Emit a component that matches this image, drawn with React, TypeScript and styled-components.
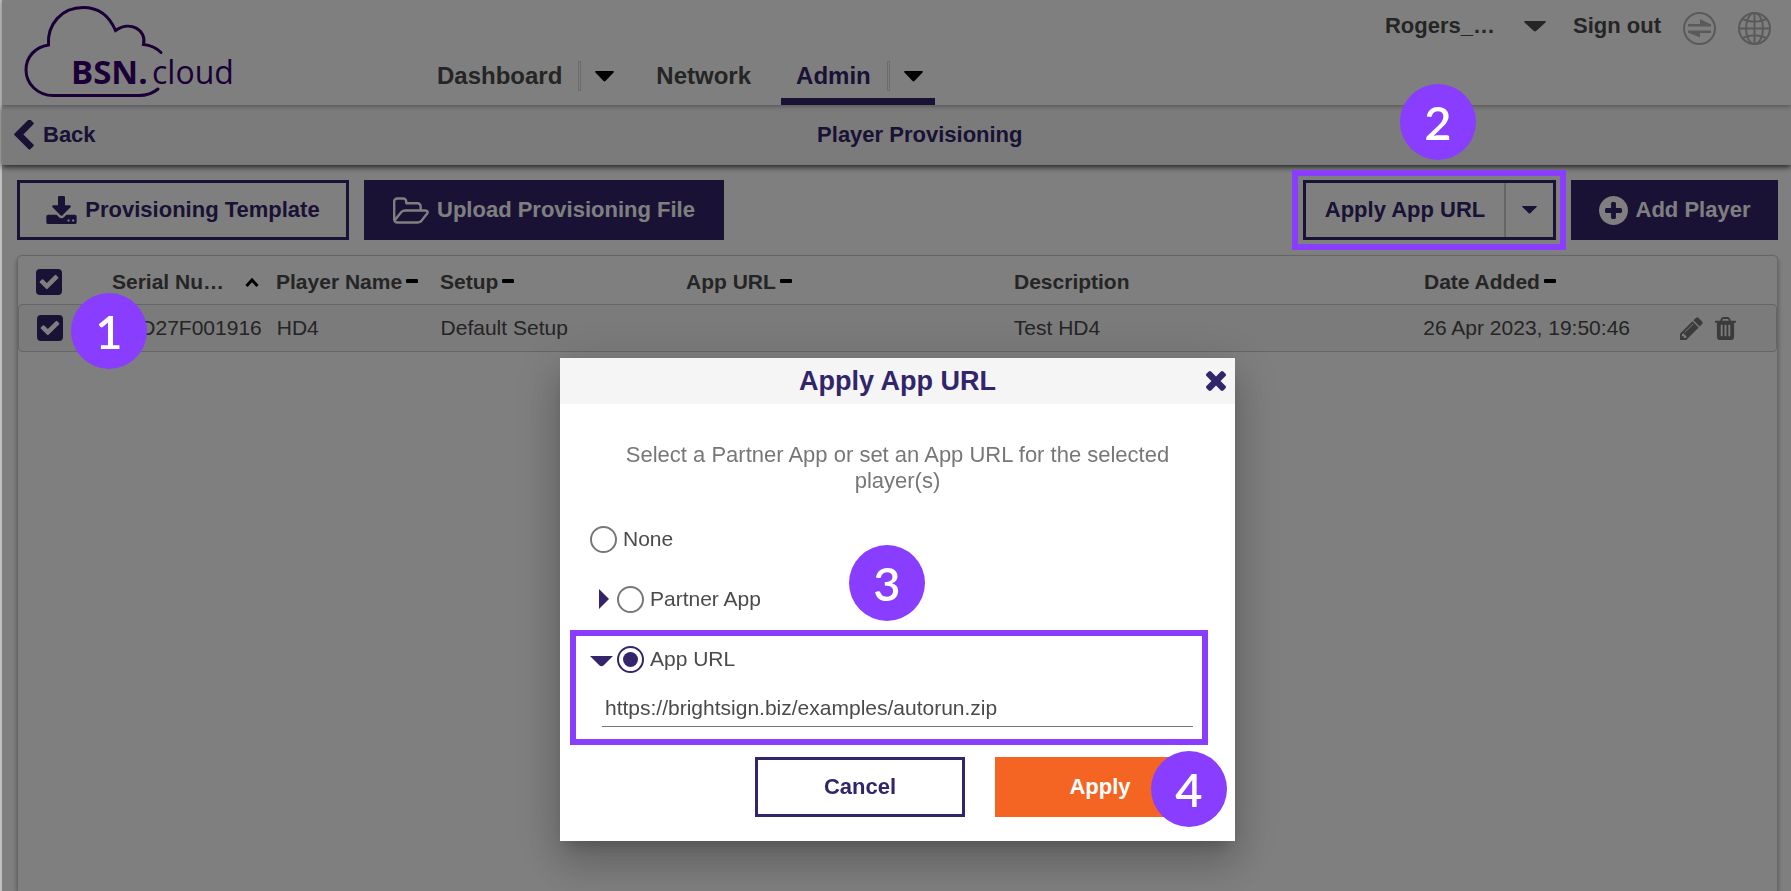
import React, { useState } from "react";
import styled, { createGlobalStyle, css } from "styled-components";

const color = {
  primary: "#32256b",
  text: "#4a4a4a",
  muted: "#777777",
  line: "#cccccc",
  panel: "#f6f6f6",
  orange: "#f46524",
  callout: "#883dff",
};

const GlobalStyle = createGlobalStyle`
  *, *::before, *::after { box-sizing: border-box; }
  body {
    margin: 0;
    background: #ffffff;
    color: ${color.text};
    font-family: "Liberation Sans", Arial, sans-serif;
    font-size: 21px;
  }
  button, input { font: inherit; color: inherit; margin: 0; }
  button { border: 0; padding: 0; background: none; cursor: pointer; }
  a { color: inherit; text-decoration: none; }
  svg { display: block; flex: none; }
`;

/* ---------- icons ---------- */

const glyphs = {
  check:
    "M813 1299l614-614q19-19 19-45t-19-45l-102-102q-19-19-45-19t-45 19l-467 467-211-211q-19-19-45-19t-45 19l-102 102q-19 19-19 45t19 45l358 358q19 19 45 19t45-19z",
  pencil:
    "M491 1536l91-91-235-235-91 91v107h128v128h107zm523-928q0-22-22-22-10 0-17 7l-542 542q-7 7-7 17 0 22 22 22 10 0 17-7l542-542q7-7 7-17zm-54-192l416 416-832 832h-416v-416zm683 96q0 53-37 90l-166 166-416-416 166-165q36-38 90-38 53 0 91 38l235 234q37 39 37 91z",
  trash:
    "M704 1376v-704q0-14-9-23t-23-9h-64q-14 0-23 9t-9 23v704q0 14 9 23t23 9h64q14 0 23-9t9-23zm256 0v-704q0-14-9-23t-23-9h-64q-14 0-23 9t-9 23v704q0 14 9 23t23 9h64q14 0 23-9t9-23zm256 0v-704q0-14-9-23t-23-9h-64q-14 0-23 9t-9 23v704q0 14 9 23t23 9h64q14 0 23-9t9-23zm-544-992h448l-48-117q-7-9-17-11h-317q-10 2-17 11zm928 32v64q0 14-9 23t-23 9h-96v948q0 83-47 143.5t-113 60.5h-832q-66 0-113-58.5t-47-141.5v-952h-96q-14 0-23-9t-9-23v-64q0-14 9-23t23-9h309l70-167q15-37 54-63t79-26h320q40 0 79 26t54 63l70 167h309q14 0 23 9t9 23z",
  close:
    "M1490 1322q0 40-28 68l-136 136q-28 28-68 28t-68-28l-294-294-294 294q-28 28-68 28t-68-28l-136-136q-28-28-28-68t28-68l294-294-294-294q-28-28-28-68t28-68l136-136q28-28 68-28t68 28l294 294 294-294q28-28 68-28t68 28l136 136q28 28 28 68t-28 68l-294 294 294 294q28 28 28 68z",
  plus: "M1344 960v-128q0-26-19-45t-45-19h-256v-256q0-26-19-45t-45-19h-128q-26 0-45 19t-19 45v256h-256q-26 0-45 19t-19 45v128q0 26 19 45t45 19h256v256q0 26 19 45t45 19h128q26 0 45-19t19-45v-256h256q26 0 45-19t19-45zm320-64q0 209-103 385.5t-279.5 279.5-385.5 103-385.5-103-279.5-279.5-103-385.5 103-385.5 279.5-279.5 385.5-103 385.5 103 279.5 279.5 103 385.5z",
  download:
    "M1344 1344q0-26-19-45t-45-19-45 19-19 45 19 45 45 19 45-19 19-45zm256 0q0-26-19-45t-45-19-45 19-19 45 19 45 45 19 45-19 19-45zm128-224v320q0 40-28 68t-68 28h-1472q-40 0-68-28t-28-68v-320q0-40 28-68t68-28h465l135 136q58 56 136 56t136-56l136-136h464q40 0 68 28t28 68zm-325-569q17 41-14 70l-448 448q-18 19-45 19t-45-19l-448-448q-31-29-14-70 17-39 59-39h256v-448q0-26 19-45t45-19h256q26 0 45 19t19 45v448h256q42 0 59 39z",
  folder:
    "M1845 931q0-35-53-35h-1088q-40 0-85.5 21.5t-71.5 52.5l-294 363q-18 24-18 40 0 35 53 35h1088q40 0 86-22t71-53l294-363q18-22 18-39zm-1141-163h768v-160q0-40-28-68t-68-28h-576q-40 0-68-28t-28-68v-64q0-40-28-68t-68-28h-320q-40 0-68 28t-28 68v853l256-315q44-53 116-87.5t140-34.5zm1269 163q0 62-46 120l-295 363q-43 53-116 87.5t-140 34.5h-1088q-92 0-158-66t-66-158v-960q0-92 66-158t158-66h320q92 0 158 66t66 158v32h544q92 0 158 66t66 158v160h192q54 0 99 24.5t67 70.5q15 32 15 68z",
  chevron:
    "M1427 301l-531 531 531 531q19 19 19 45t-19 45l-166 166q-19 19-45 19t-45-19l-742-742q-19-19-19-45t19-45l742-742q19-19 45-19t45 19l166 166q19 19 19 45t-19 45z",
};

type GlyphProps = { name: keyof typeof glyphs; width: number; height: number; box: string };

const Glyph = ({ name, width, height, box }: GlyphProps) => (
  <svg width={width} height={height} viewBox={box} fill="currentColor" aria-hidden="true">
    <path d={glyphs[name]} />
  </svg>
);

const Caret = ({ width, height }: { width: number; height: number }) => (
  <svg width={width} height={height} viewBox="0 0 20 12" preserveAspectRatio="none" fill="currentColor" aria-hidden="true">
    <path d="M1 0h18q1.400 .4 .5 1.500L11 11q-1 1-2 0L.5 1.500Q-.4 .4 1 0z" />
  </svg>
);

const SortUp = () => (
  <svg width="14" height="12" viewBox="0 0 14 12" fill="none" stroke="#000" strokeWidth="3" aria-hidden="true">
    <path d="M1.500 10L7 4l5.500 6" />
  </svg>
);

const SortNone = () => (
  <svg width="12" height="12" viewBox="0 0 12 12" aria-hidden="true">
    <rect y="3" width="12" height="4" rx="1" fill="#000" />
  </svg>
);

const SwapIcon = () => (
  <svg width="33" height="33" viewBox="0 0 33 33" aria-hidden="true">
    <circle cx="16.500" cy="16.500" r="15.500" fill="none" stroke="#b4b4b4" strokeWidth="2" />
    <path d="M5 12h23v2.500H5zM17 7l11 5.500v2H17zM5 18.500h23V21H5zM17 25.500L5 20.500v-2h12z" fill="#b4b4b4" />
  </svg>
);

const GlobeIcon = () => (
  <svg width="33" height="33" viewBox="0 0 33 33" fill="none" stroke="#b4b4b4" strokeWidth="2" aria-hidden="true">
    <circle cx="16.500" cy="16.500" r="15.500" />
    <ellipse cx="16.500" cy="16.500" rx="8.500" ry="15.500" />
    <path d="M16.500 1v31M1 16.500h31M4.500 7q12 5.500 24 0M4.500 26q12-5.500 24 0" />
  </svg>
);

const Logo = () => (
  <svg width="230" height="100" viewBox="22 4 230 100" role="img" aria-label="BSN.cloud">
    <path
      d="M161 52.500Q154 45.500 143.500 44.500C147 30 130 20 115.500 30.500C109 15 99 7.500 83 7.500C62 7.500 47 24 48.500 45C35 47 26 57 26 70C26 84 38 95.500 53 95.500H139Q150 95.500 158 89"
      fill="none"
      stroke="#360070"
      strokeWidth="3"
      strokeLinecap="round"
    />
    <text x="71" y="84" fill="#360070" fontFamily="'Open Sans', 'Noto Sans', sans-serif" fontSize="33" fontWeight="700">
      BSN.
    </text>
    <text x="152" y="84" fill="#360070" fontFamily="'Open Sans', 'Noto Sans', sans-serif" fontSize="32">
      cloud
    </text>
  </svg>
);

/* ---------- page frame ---------- */

const Page = styled.div`
  display: flex;
  flex-direction: column;
  min-height: 100vh;
  border-left: 2px solid #c0c0c0;
`;

const Header = styled.header`
  position: relative;
  z-index: 2;
  display: flex;
  height: 105px;
  padding-left: 20px;
  background: #ffffff;
  box-shadow: 0 1px 5px rgba(0, 0, 0, 0.35);
`;

const Brand = styled.a`
  padding-top: 4px;
  margin-right: 170px;
`;

const Nav = styled.nav`
  display: flex;
  align-items: flex-end;
  gap: 15px;
`;

const NavItem = styled.div<{ $active?: boolean }>`
  display: flex;
  align-items: center;
  height: 51px;
  padding: 0 15px;
  font-size: 24px;
  font-weight: bold;
  color: ${(p) => (p.$active ? color.primary : color.text)};
  border-bottom: 7px solid ${(p) => (p.$active ? color.primary : "transparent")};
`;

const NavMenuButton = styled.button`
  display: flex;
  align-items: center;
  height: 30px;
  margin: 0 -3px 0 16px;
  color: #000000;

  &::before {
    content: "";
    width: 3px;
    height: 30px;
    margin-right: 14px;
    border: 1px solid #d8d8d8;
  }
`;

const Account = styled.div`
  display: flex;
  align-items: flex-start;
  margin-left: auto;
  padding: 12px 20px 0 0;
  font-size: 22px;
  font-weight: bold;
  line-height: 28px;
`;

const AccountMenu = styled.button`
  display: flex;
  align-items: center;
  gap: 29px;
  margin-right: 27px;
`;

const AccountIcon = styled.button`
  margin-left: 22px;
`;

const SubHeader = styled.div`
  position: relative;
  z-index: 1;
  display: flex;
  align-items: center;
  height: 60px;
  padding: 0 47px 0 12px;
  background: ${color.panel};
  color: ${color.primary};
  box-shadow: 0 2px 6px rgba(0, 0, 0, 0.75);
  font-size: 22px;
  font-weight: bold;
`;

const BackLink = styled.a`
  display: flex;
  align-items: center;
  gap: 9px;
`;

const PageTitle = styled.h1`
  flex: 1;
  margin: 0;
  font-size: 22px;
  text-align: center;
`;

/* ---------- toolbar ---------- */

const Toolbar = styled.div`
  display: flex;
  gap: 15px;
  padding: 15px 13px 15px 15px;
`;

const Button = styled.button<{ $kind: "outline" | "solid" | "accent"; $width: number }>`
  display: flex;
  align-items: center;
  justify-content: center;
  gap: 8px;
  min-width: ${(p) => p.$width}px;
  height: 60px;
  font-size: 22px;
  font-weight: bold;
  white-space: nowrap;
  ${(p) =>
    p.$kind === "outline"
      ? css`
          border: 3px solid ${color.primary};
          color: ${color.primary};
        `
      : css`
          background: ${p.$kind === "solid" ? color.primary : color.orange};
          color: #ffffff;
        `}
`;

const SplitButton = styled.div`
  position: relative;
  display: flex;
  width: 253px;
  height: 60px;
  margin-left: auto;
  border: 3px solid ${color.primary};
  color: ${color.primary};
  font-size: 22px;
  font-weight: bold;
`;

const SplitMain = styled.button`
  flex: 1;
  border-right: 2px solid ${color.line};
`;

const SplitCaret = styled.button`
  display: flex;
  align-items: center;
  justify-content: center;
  width: 47px;
`;

/* ---------- callouts ---------- */

const Callout = styled.span<{ $left: number; $top: number }>`
  position: absolute;
  z-index: 20;
  left: ${(p) => p.$left}px;
  top: ${(p) => p.$top}px;
  display: flex;
  align-items: center;
  justify-content: center;
  width: 76px;
  height: 76px;
  border-radius: 50%;
  background: ${color.callout};
  color: #ffffff;
  font-family: Lato, "Liberation Sans", sans-serif;
  font-size: 47px;
  font-weight: 600;
  line-height: 74px;
  pointer-events: none;
`;

const Highlight = styled.span<{ $inset: string }>`
  position: absolute;
  z-index: 20;
  inset: ${(p) => p.$inset};
  border: 6px solid ${color.callout};
  pointer-events: none;
`;

/* ---------- player list ---------- */

const List = styled.main`
  flex: 1;
  margin: 0 13px 0 15px;
  border: 1px solid ${color.line};
  border-bottom: 0;
  border-radius: 5px 5px 0 0;
  box-shadow: 0 3px 5px rgba(0, 0, 0, 0.35);
`;

const Table = styled.table`
  display: block;
`;

const RowGroup = styled.thead`
  display: block;
`;

const Row = styled.tr<{ $head?: boolean }>`
  display: grid;
  grid-template-columns:
    94px minmax(0, 2fr) minmax(0, 2fr) minmax(0, 3fr) minmax(0, 4fr)
    minmax(0, 5fr) minmax(0, 3fr) 107px;
  align-items: center;
  height: 48px;
  ${(p) =>
    p.$head
      ? css`
          padding-top: 3px;
        `
      : css`
          border: 1px solid ${color.line};
          border-radius: 4px;
          background: ${color.panel};
        `}
`;

const HeadCell = styled.th`
  display: flex;
  align-items: center;
  gap: 4px;
  padding: 0;
  text-align: left;
  white-space: nowrap;
`;

const SerialHeadCell = styled(HeadCell)`
  justify-content: space-between;
  padding-right: 17px;
`;

const Cell = styled.td`
  padding: 0;
  white-space: nowrap;
`;

const SerialCell = styled(Cell)`
  padding-right: 15px;
  text-align: right;
`;

const CheckCell = styled(Cell)`
  position: relative;
  padding-left: 18px;
`;

const ActionCell = styled(Cell)`
  display: flex;
  align-items: center;
  gap: 12px;
  padding-left: 11px;
  color: #777777;
`;

const CheckLabel = styled.label`
  display: grid;
  width: 26px;
  height: 26px;
  color: #ffffff;

  > * {
    grid-area: 1 / 1;
    place-self: center;
  }
`;

const CheckInput = styled.input`
  appearance: none;
  width: 26px;
  height: 26px;
  border: 2px solid ${color.primary};
  border-radius: 4px;
  background: #ffffff;

  &:checked {
    background: ${color.primary};
  }
`;

const CheckBox = ({ label }: { label: string }) => {
  const [checked, setChecked] = useState(true);
  return (
    <CheckLabel>
      <CheckInput type="checkbox" aria-label={label} checked={checked} onChange={() => setChecked(!checked)} />
      {checked && <Glyph name="check" width={20} height={16} box="320 424 1152 944" />}
    </CheckLabel>
  );
};

/* ---------- dialog ---------- */

const Backdrop = styled.div`
  position: fixed;
  z-index: 10;
  inset: 0 0 0 2px;
  display: flex;
  align-items: flex-start;
  justify-content: center;
  padding: 358px 0 0 2px;
  background: rgba(0, 0, 0, 0.5);
`;

const Dialog = styled.section`
  width: 675px;
  background: #ffffff;
  box-shadow:
    0 11px 15px -7px rgba(0, 0, 0, 0.2),
    0 24px 38px 3px rgba(0, 0, 0, 0.14),
    0 9px 46px 8px rgba(0, 0, 0, 0.12);
`;

const DialogHeader = styled.header`
  display: flex;
  align-items: center;
  height: 46px;
  padding: 0 9px 0 29px;
  background: #f5f5f5;
  color: ${color.primary};
`;

const DialogTitle = styled.h2`
  flex: 1;
  margin: 0;
  font-size: 27px;
  text-align: center;
`;

const DialogBody = styled.form`
  padding: 38px 30px 24px;
`;

const Prompt = styled.p`
  margin: 0 0 15px;
  color: ${color.muted};
  font-size: 22px;
  line-height: 26px;
  text-align: center;
`;

const Option = styled.div`
  position: relative;
  display: flex;
  align-items: center;
  height: 60px;
`;

const Toggle = styled.button`
  display: flex;
  align-items: center;
  justify-content: center;
  width: 27px;
  height: 27px;
  color: ${color.primary};
`;

const OptionLabel = styled.label`
  display: flex;
  align-items: center;
  gap: 6px;
`;

const Radio = styled.input`
  appearance: none;
  display: grid;
  place-content: center;
  width: 27px;
  height: 27px;
  border: 2px solid #777777;
  border-radius: 50%;

  &:checked {
    border-color: ${color.primary};
  }

  &:checked::before {
    content: "";
    width: 15px;
    height: 15px;
    border-radius: 50%;
    background: ${color.primary};
  }
`;

const UrlSection = styled.div`
  position: relative;
  padding-right: 12px;
`;

const UrlInput = styled.input`
  display: block;
  width: calc(100% - 12px);
  height: 38px;
  margin-left: 12px;
  padding: 0 3px;
  border: 0;
  border-bottom: 1px solid #777777;
  outline: 0;
  background: none;
`;

const Actions = styled.div`
  display: flex;
  justify-content: flex-end;
  gap: 30px;
  margin-top: 30px;
`;

const ActionSlot = styled.div`
  position: relative;
`;

export default function App() {
  const [choice, setChoice] = useState("url");
  const [url, setUrl] = useState("https://brightsign.biz/examples/autorun.zip");

  return (
    <>
      <GlobalStyle />
      <Page>
        <Header>
          <Brand href="#">
            <Logo />
          </Brand>
          <Nav>
            <NavItem>
              <a href="#dashboard">Dashboard</a>
              <NavMenuButton aria-label="Dashboard menu">
                <Caret width={19} height={11} />
              </NavMenuButton>
            </NavItem>
            <NavItem>
              <a href="#network">Network</a>
            </NavItem>
            <NavItem $active>
              <a href="#admin">Admin</a>
              <NavMenuButton aria-label="Admin menu">
                <Caret width={19} height={11} />
              </NavMenuButton>
            </NavItem>
          </Nav>
          <Account>
            <AccountMenu>
              Rogers_…
              <Caret width={22} height={11} />
            </AccountMenu>
            <a href="#signout">Sign out</a>
            <AccountIcon aria-label="Switch network">
              <SwapIcon />
            </AccountIcon>
            <AccountIcon aria-label="Language">
              <GlobeIcon />
            </AccountIcon>
          </Account>
        </Header>

        <SubHeader>
          <BackLink href="#back">
            <Glyph name="chevron" width={20} height={30} box="400 80 1056 1568" />
            Back
          </BackLink>
          <PageTitle>Player Provisioning</PageTitle>
        </SubHeader>

        <Toolbar>
          <Button $kind="outline" $width={332}>
            <Glyph name="download" width={31} height={28} box="64 0 1664 1536" />
            Provisioning Template
          </Button>
          <Button $kind="solid" $width={360}>
            <Glyph name="folder" width={36} height={27} box="64 128 1920 1408" />
            Upload Provisioning File
          </Button>
          <SplitButton>
            <SplitMain>Apply App URL</SplitMain>
            <SplitCaret aria-label="More apply options">
              <Caret width={15} height={8} />
            </SplitCaret>
            <Highlight $inset="-13px -13px -13px -14px" />
            <Callout $left={94} $top={-99}>
              2
            </Callout>
          </SplitButton>
          <Button $kind="solid" $width={207}>
            <Glyph name="plus" width={29} height={29} box="128 128 1536 1536" />
            Add Player
          </Button>
        </Toolbar>

        <List>
          <Table>
            <RowGroup>
              <Row $head>
                <CheckCell as="th">
                  <CheckBox label="Select all players" />
                </CheckCell>
                <SerialHeadCell>
                  Serial Nu…
                  <SortUp />
                </SerialHeadCell>
                <HeadCell>
                  Player Name
                  <SortNone />
                </HeadCell>
                <HeadCell>
                  Setup
                  <SortNone />
                </HeadCell>
                <HeadCell>
                  App URL
                  <SortNone />
                </HeadCell>
                <HeadCell>Description</HeadCell>
                <HeadCell>
                  Date Added
                  <SortNone />
                </HeadCell>
                <th aria-label="Actions" />
              </Row>
            </RowGroup>
            <RowGroup as="tbody">
              <Row>
                <CheckCell>
                  <CheckBox label="Select player HD4" />
                  <Callout $left={52} $top={-22}>
                    1
                  </Callout>
                </CheckCell>
                <SerialCell>D27F001916</SerialCell>
                <Cell>HD4</Cell>
                <Cell>Default Setup</Cell>
                <Cell />
                <Cell>Test HD4</Cell>
                <Cell>26 Apr 2023, 19:50:46</Cell>
                <ActionCell>
                  <button aria-label="Edit player">
                    <Glyph name="pencil" width={23} height={23} box="128 128 1536 1536" />
                  </button>
                  <button aria-label="Delete player">
                    <Glyph name="trash" width={21} height={23} box="192 128 1408 1536" />
                  </button>
                </ActionCell>
              </Row>
            </RowGroup>
          </Table>
        </List>
      </Page>

      <Backdrop>
        <Dialog role="dialog" aria-modal="true" aria-labelledby="dialog-title">
          <DialogHeader>
            <DialogTitle id="dialog-title">Apply App URL</DialogTitle>
            <button aria-label="Close">
              <Glyph name="close" width={20} height={20} box="302 366 1188 1188" />
            </button>
          </DialogHeader>
          <DialogBody onSubmit={(e: React.FormEvent) => e.preventDefault()}>
            <Prompt>Select a Partner App or set an App URL for the selected player(s)</Prompt>
            <Option>
              <OptionLabel>
                <Radio type="radio" name="app" checked={choice === "none"} onChange={() => setChoice("none")} />
                None
              </OptionLabel>
            </Option>
            <Option>
              <Toggle type="button" aria-label="Expand Partner App">
                <svg width="10" height="20" viewBox="0 0 10 20" fill="currentColor" aria-hidden="true">
                  <path d="M0 0l10 10L0 20z" />
                </svg>
              </Toggle>
              <OptionLabel>
                <Radio type="radio" name="app" checked={choice === "partner"} onChange={() => setChoice("partner")} />
                Partner App
              </OptionLabel>
              <Callout $left={259} $top={-24}>
                3
              </Callout>
            </Option>
            <UrlSection>
              <Option>
                <Toggle type="button" aria-label="Collapse App URL">
                  <svg width="27" height="15" viewBox="0 0 27 15" fill="currentColor" aria-hidden="true">
                    <path d="M0 4h23l-9.500 9.500q-2 1.500-4 0z" />
                  </svg>
                </Toggle>
                <OptionLabel>
                  <Radio type="radio" name="app" checked={choice === "url"} onChange={() => setChoice("url")} />
                  App URL
                </OptionLabel>
              </Option>
              <UrlInput type="text" aria-label="App URL address" value={url} onChange={(e) => setUrl(e.target.value)} />
              <Highlight $inset="1px -3px -18px -20px" />
            </UrlSection>
            <Actions>
              <Button type="button" $kind="outline" $width={210}>
                Cancel
              </Button>
              <ActionSlot>
                <Button type="submit" $kind="accent" $width={210}>
                  Apply
                </Button>
                <Callout $left={156} $top={-6}>
                  4
                </Callout>
              </ActionSlot>
            </Actions>
          </DialogBody>
        </Dialog>
      </Backdrop>
    </>
  );
}
